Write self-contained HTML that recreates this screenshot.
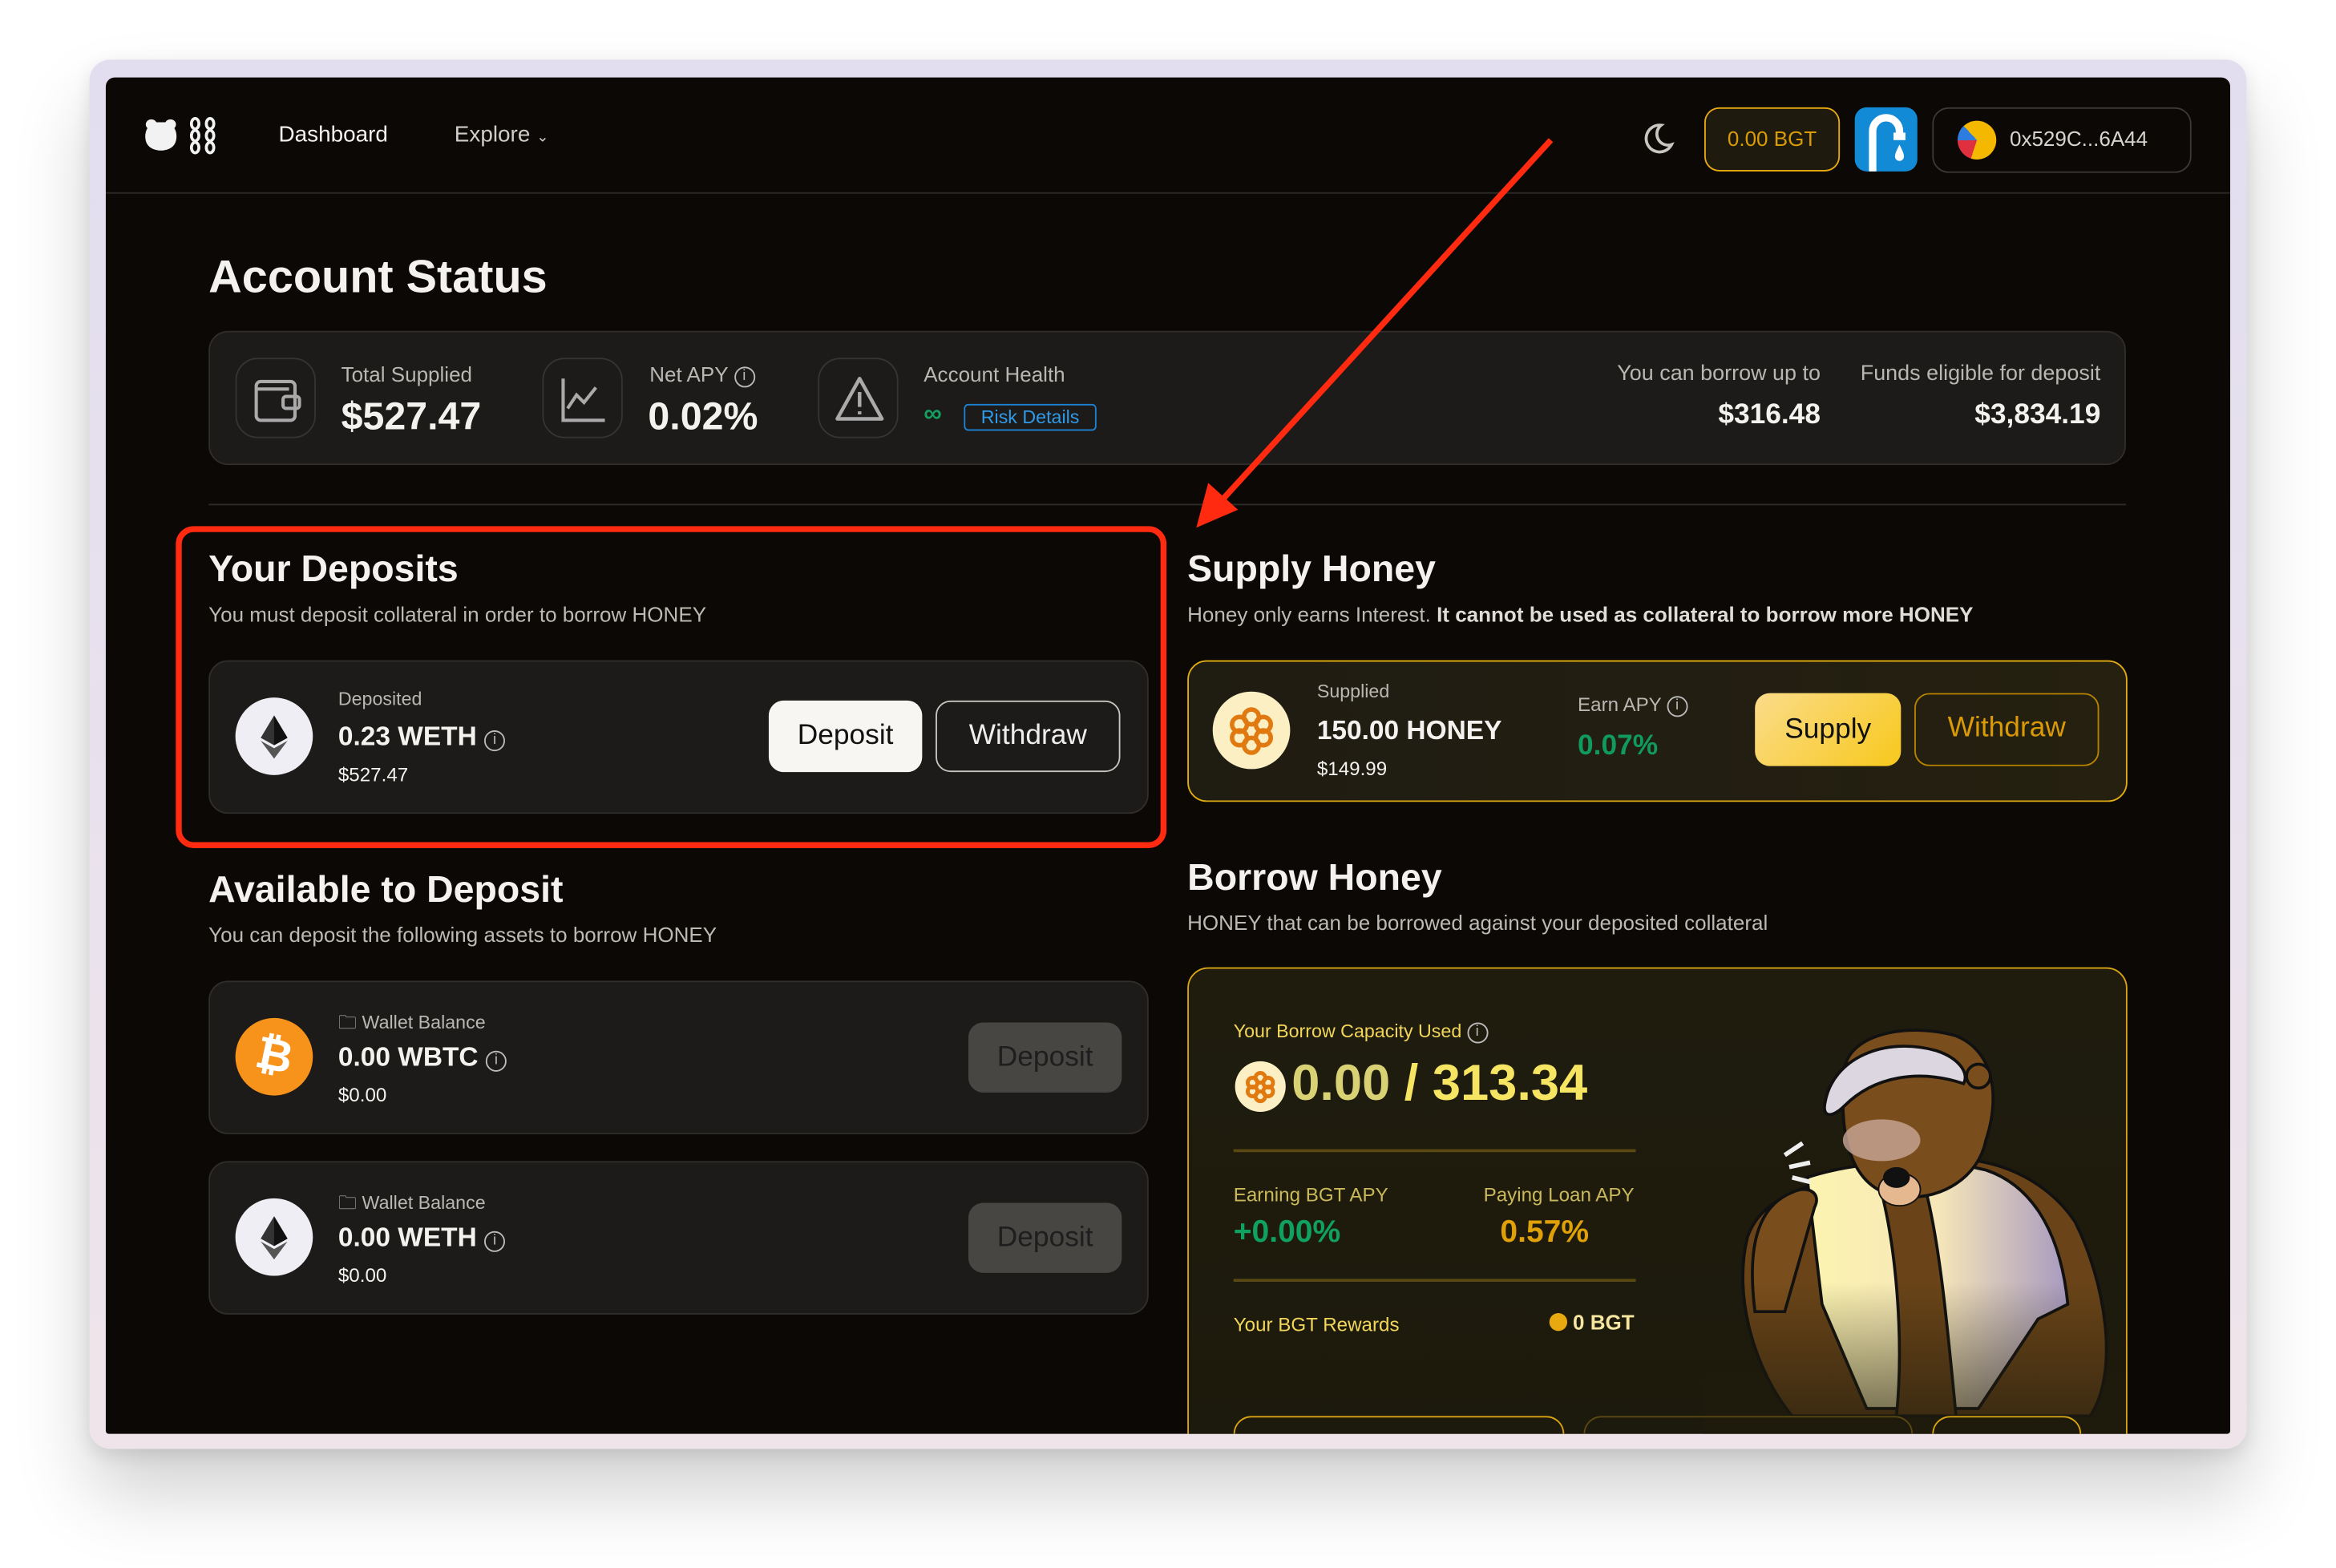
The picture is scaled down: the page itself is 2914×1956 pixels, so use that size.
<!DOCTYPE html>
<html><head><meta charset="utf-8">
<style>
*{box-sizing:border-box;margin:0;padding:0}
html,body{width:2914px;height:1956px;overflow:hidden;background:#fff}
#s{position:absolute;left:0;top:0;width:1568px;height:1052px;transform:scale(1.8584,1.8593);transform-origin:0 0;font-family:"Liberation Sans",sans-serif;background:#fff}
.a{position:absolute;white-space:nowrap}
.frame{left:60px;top:40px;width:1448px;height:932px;border-radius:14px;background:linear-gradient(180deg,#e2def0,#efe4ea);box-shadow:0 30px 50px rgba(0,0,0,.18),0 4px 12px rgba(0,0,0,.1)}
.win{left:71px;top:52px;width:1426px;height:910px;background:#0b0805;border-radius:6px 6px 2px 2px;overflow:hidden}
.card{background:#1c1b19;border:1px solid #2f2e2b;border-radius:13px}
.g{color:#b9b7b2}
.w{color:#f4f2ee}
.h2{font-size:25px;font-weight:bold;color:#f4f2ee}
.sub{font-size:14px;color:#bdbab4}
.ibox{width:54px;height:54px;border:1px solid #353431;border-radius:15px}
.btn{border-radius:10px;font-size:19px;text-align:center;font-weight:500}
.info{display:inline-block;width:14px;height:14px;border:1.4px solid #bbb;border-radius:50%;font-size:10px;line-height:11px;text-align:center;vertical-align:1px;color:#bbb;font-weight:normal}
</style></head><body><div id="s">
<div class="a frame"></div>
<div class="a win">
<svg class="a" style="left:24px;top:26px" width="56" height="26" viewBox="0 0 56 26"><path d="M4 3a4 4 0 0 1 6 1h6a4 4 0 0 1 6-1c2 2 1 4 0 5 2 3 2 8 0 11-2 3-6 4-9 4s-7-1-9-4c-2-3-2-8 0-11-1-1-2-3 0-5z" fill="#f2f2f2"/><g fill="none" stroke="#f2f2f2" stroke-width="2"><ellipse cx="36" cy="5" rx="2.5" ry="3.5"/><ellipse cx="36" cy="13" rx="2.5" ry="3.5"/><ellipse cx="36" cy="21" rx="2.5" ry="3.5"/><ellipse cx="46" cy="5" rx="2.5" ry="3.5"/><ellipse cx="46" cy="13" rx="2.5" ry="3.5"/><ellipse cx="46" cy="21" rx="2.5" ry="3.5"/></g></svg>
<div class="a w" style="left:116px;top:30px;font-size:15px">Dashboard</div>
<div class="a" style="left:234px;top:30px;font-size:15px;color:#cfcdc8">Explore <span style="font-size:10px">⌄</span></div>
<svg class="a" style="left:1030px;top:29px" width="24" height="24" viewBox="0 0 24 24"><path d="M14 3a9 9 0 1 0 7 13A7.5 7.5 0 0 1 14 3z" fill="none" stroke="#c8c6c0" stroke-width="2"/></svg>
<div class="a" style="left:1073px;top:20px;width:91px;height:43px;border:1.5px solid #e8aa10;border-radius:10px;background:#1e1a0e;color:#d99c06;font-size:14px;line-height:40px;text-align:center">0.00 BGT</div>
<div class="a" style="left:1174px;top:20px;width:42px;height:43px;background:#138ad6;border-radius:8px"><svg width="42" height="43" viewBox="0 0 42 43"><path d="M12 43V16a9 9 0 0 1 18 0v3" fill="none" stroke="#fff" stroke-width="5"/><rect x="26" y="17" width="8" height="5" fill="#fff"/><path d="M30 25c-2 4-3 6-3 8a3 3 0 0 0 6 0c0-2-1-4-3-8z" fill="#fff"/></svg></div>
<div class="a" style="left:1226px;top:20px;width:174px;height:44px;border:1px solid #3a3936;border-radius:11px"></div>
<div class="a" style="left:1243px;top:29px;width:26px;height:26px;border-radius:50%;background:conic-gradient(#f5b800 0 55%,#e03040 55% 75%,#2d7de0 75% 88%,#f5b800 88%)"></div>
<div class="a" style="left:1278px;top:33px;font-size:14px;color:#d6d4cf">0x529C...6A44</div>
<div class="a" style="left:0;top:77px;width:1426px;height:1px;background:#2c2b29"></div>

<div class="a w" style="left:69px;top:116px;font-size:31px;font-weight:bold">Account Status</div>
<div class="a card" style="left:69px;top:170px;width:1287px;height:90px"></div>
<div class="a ibox" style="left:87px;top:188px"><svg width="54" height="54" viewBox="0 0 54 54"><g fill="none" stroke="#aaa" stroke-width="2.2"><rect x="13" y="15" width="26" height="26" rx="3"/><path d="M13 20h22"/><rect x="31" y="25" width="11" height="8" rx="2"/></g></svg></div>
<div class="a g" style="left:158px;top:191px;font-size:14px">Total Supplied</div>
<div class="a w" style="left:158px;top:212px;font-size:26px;font-weight:bold">$527.47</div>
<div class="a ibox" style="left:293px;top:188px"><svg width="54" height="54" viewBox="0 0 54 54"><path d="M13 13v28h28M16 33l6-9 5 5 8-10" fill="none" stroke="#aaa" stroke-width="2.2"/></svg></div>
<div class="a g" style="left:365px;top:191px;font-size:14px">Net APY <span class="info">i</span></div>
<div class="a w" style="left:364px;top:212px;font-size:26px;font-weight:bold">0.02%</div>
<div class="a ibox" style="left:478px;top:188px"><svg width="54" height="54" viewBox="0 0 54 54"><path d="M27 13L12 40h30z" fill="none" stroke="#aaa" stroke-width="2.4" stroke-linejoin="round"/><path d="M27 22v10M27 35v2" stroke="#aaa" stroke-width="2.4"/></svg></div>
<div class="a g" style="left:549px;top:191px;font-size:14px">Account Health</div>
<div class="a" style="left:549px;top:216px;font-size:17px;color:#12a060;font-weight:bold">∞</div>
<div class="a" style="left:576px;top:219px;width:89px;height:18px;border:1px solid #1c82d4;border-radius:3px;color:#2e9aea;font-size:12.5px;line-height:16px;text-align:center">Risk Details</div>
<div class="a g" style="right:275px;top:191px;font-size:14.5px">You can borrow up to</div>
<div class="a w" style="right:275px;top:216px;font-size:19px;font-weight:bold">$316.48</div>
<div class="a g" style="right:87px;top:191px;font-size:14.5px">Funds eligible for deposit</div>
<div class="a w" style="right:87px;top:216px;font-size:19px;font-weight:bold">$3,834.19</div>
<div class="a" style="left:69px;top:286px;width:1287px;height:1px;background:#2e2d2a"></div>

<div class="a h2" style="left:69px;top:316px">Your Deposits</div>
<div class="a sub" style="left:69px;top:352px">You must deposit collateral in order to borrow HONEY</div>
<div class="a card" style="left:69px;top:391px;width:631px;height:103px"></div>
<div class="a" style="left:87px;top:416px;width:52px;height:52px;border-radius:50%;background:#eeeef4"><svg width="52" height="52" viewBox="0 0 52 52"><path d="M26 12l-9 15 9 5 9-5z" fill="#333"/><path d="M26 34l-9-5 9 12 9-12z" fill="#555"/><path d="M26 12v20l9-5z" fill="#111"/></svg></div>
<div class="a g" style="left:156px;top:410px;font-size:12.5px">Deposited</div>
<div class="a w" style="left:156px;top:432px;font-size:18px;font-weight:bold">0.23 WETH <span class="info">i</span></div>
<div class="a w" style="left:156px;top:460px;font-size:13px">$527.47</div>
<div class="a btn" style="left:445px;top:418px;width:103px;height:48px;background:#f7f6f3;color:#111;line-height:48px">Deposit</div>
<div class="a btn" style="left:557px;top:418px;width:124px;height:48px;border:1.5px solid #c8c6c1;color:#eee;line-height:45px">Withdraw</div>

<div class="a h2" style="left:69px;top:531px">Available to Deposit</div>
<div class="a sub" style="left:69px;top:567px">You can deposit the following assets to borrow HONEY</div>
<div class="a card" style="left:69px;top:606px;width:631px;height:103px"></div>
<div class="a" style="left:87px;top:631px;width:52px;height:52px;border-radius:50%;background:#f7931a;color:#fff;font-size:30px;font-weight:bold;text-align:center;line-height:52px;transform:rotate(12deg)">₿</div>
<div class="a g" style="left:156px;top:625px;font-size:12.5px">🗀 Wallet Balance</div>
<div class="a w" style="left:156px;top:647px;font-size:18px;font-weight:bold">0.00 WBTC <span class="info">i</span></div>
<div class="a w" style="left:156px;top:675px;font-size:13px">$0.00</div>
<div class="a btn" style="left:579px;top:634px;width:103px;height:47px;background:#474643;color:#1e1e1e;line-height:47px">Deposit</div>
<div class="a card" style="left:69px;top:727px;width:631px;height:103px"></div>
<div class="a" style="left:87px;top:752px;width:52px;height:52px;border-radius:50%;background:#eeeef4"><svg width="52" height="52" viewBox="0 0 52 52"><path d="M26 12l-9 15 9 5 9-5z" fill="#333"/><path d="M26 34l-9-5 9 12 9-12z" fill="#555"/><path d="M26 12v20l9-5z" fill="#111"/></svg></div>
<div class="a g" style="left:156px;top:746px;font-size:12.5px">🗀 Wallet Balance</div>
<div class="a w" style="left:156px;top:768px;font-size:18px;font-weight:bold">0.00 WETH <span class="info">i</span></div>
<div class="a w" style="left:156px;top:796px;font-size:13px">$0.00</div>
<div class="a btn" style="left:579px;top:755px;width:103px;height:47px;background:#474643;color:#1e1e1e;line-height:47px">Deposit</div>

<div class="a h2" style="left:726px;top:316px">Supply Honey</div>
<div class="a sub" style="left:726px;top:352px">Honey only earns Interest. <b style="color:#dedcd6">It cannot be used as collateral to borrow more HONEY</b></div>
<div class="a" style="left:726px;top:391px;width:631px;height:95px;border:1.5px solid #e2ac10;border-radius:13px;background:linear-gradient(90deg,#1f1c12,#252010)"></div>
<div class="a" style="left:743px;top:412px;width:52px;height:52px;border-radius:50%;background:#fcefc4"><svg width="52" height="52" viewBox="0 0 52 52"><g fill="none" stroke="#e07a10" stroke-width="3"><circle cx="26" cy="17" r="5"/><circle cx="18" cy="22" r="5"/><circle cx="34" cy="22" r="5"/><circle cx="18" cy="31" r="5"/><circle cx="34" cy="31" r="5"/><circle cx="26" cy="36" r="5"/></g></svg></div>
<div class="a g" style="left:813px;top:405px;font-size:12.5px">Supplied</div>
<div class="a w" style="left:813px;top:428px;font-size:18px;font-weight:bold">150.00 HONEY</div>
<div class="a w" style="left:813px;top:456px;font-size:13px">$149.99</div>
<div class="a g" style="left:988px;top:413px;font-size:13px">Earn APY <span class="info">i</span></div>
<div class="a" style="left:988px;top:438px;font-size:19px;font-weight:bold;color:#109a5e">0.07%</div>
<div class="a btn" style="left:1107px;top:413px;width:98px;height:49px;background:linear-gradient(135deg,#fbdc8a,#f7c81c);color:#111;line-height:49px">Supply</div>
<div class="a btn" style="left:1214px;top:413px;width:124px;height:49px;border:1.5px solid #b88400;color:#d99a06;line-height:46px">Withdraw</div>

<div class="a h2" style="left:726px;top:523px">Borrow Honey</div>
<div class="a sub" style="left:726px;top:559px">HONEY that can be borrowed against your deposited collateral</div>
<div class="a" style="left:726px;top:597px;width:631px;height:360px;border:1.5px solid #d8a412;border-radius:14px;background:linear-gradient(180deg,#1f1c0e,#1c1a0c);overflow:hidden">
 <svg class="a" style="left:345px;top:25px" width="290" height="310" viewBox="0 0 290 300">
  <defs><linearGradient id="sh" x1="0" y1="0" x2="1" y2="0"><stop offset="0" stop-color="#fcf4b0"/><stop offset=".5" stop-color="#f6e6b8"/><stop offset="1" stop-color="#a89ac0"/></linearGradient>
  <linearGradient id="fd" x1="0" y1="0" x2="0" y2="1"><stop offset=".6" stop-color="#1e1b0d" stop-opacity="0"/><stop offset="1" stop-color="#1e1b0d" stop-opacity=".8"/></linearGradient></defs>
  <path d="M30 150c-10 40 5 90 30 120h200c20-30 10-90-10-130-20-30-60-50-110-40-60 10-100 20-110 50z" fill="#6a4418" stroke="#111" stroke-width="2"/>
  <path d="M70 110c30-10 80-15 120-5 30 10 50 40 55 90l-20 10-40 60H110l-30-70z" fill="url(#sh)" stroke="#111" stroke-width="2"/>
  <path d="M120 120c10 40 15 100 10 150h40c-5-50-10-110-20-150z" fill="#6a4418" stroke="#111" stroke-width="2"/>
  <path d="M95 40c0-25 40-35 75-25 25 10 30 40 20 70-5 25-30 40-55 38-30-2-45-30-40-83z" fill="#7a4e1c" stroke="#111" stroke-width="2"/>
  <path d="M82 60c5-30 40-45 75-35 15 5 22 15 18 22-30-10-60-5-80 15-8 8-15 8-13-2z" fill="#dcd6e0" stroke="#111" stroke-width="2"/>
  <ellipse cx="120" cy="85" rx="26" ry="14" fill="#c9a89a" opacity=".8"/>
  <ellipse cx="132" cy="118" rx="14" ry="11" fill="#e6b890" stroke="#111"/>
  <ellipse cx="130" cy="110" rx="9" ry="7" fill="#111"/>
  <circle cx="185" cy="42" r="8" fill="#7a4e1c" stroke="#111" stroke-width="2"/>
  <path d="M35 200c-5-40 0-70 25-80 10-5 20 0 15 10l-20 70z" fill="#7a4e1c" stroke="#111" stroke-width="2"/>
  <path d="M55 95l12-8M58 103l14-3M60 110l12 3" stroke="#eee" stroke-width="3"/>
  <rect x="0" y="0" width="290" height="300" fill="url(#fd)"/>
 </svg>
 <div class="a" style="left:30px;top:35px;font-size:12.5px;color:#f2d65a">Your Borrow Capacity Used <span class="info" style="border-color:#bbb">i</span></div>
 <div class="a" style="left:31px;top:62px;width:34px;height:34px;border-radius:50%;background:#fcefc4"><svg width="34" height="34" viewBox="0 0 52 52"><g fill="none" stroke="#e07a10" stroke-width="4"><circle cx="26" cy="17" r="5"/><circle cx="18" cy="22" r="5"/><circle cx="34" cy="22" r="5"/><circle cx="18" cy="31" r="5"/><circle cx="34" cy="31" r="5"/><circle cx="26" cy="36" r="5"/></g></svg></div>
 <div class="a" style="left:69px;top:58px;font-size:34px;font-weight:bold;color:#d8d274">0.00<span style="color:#f6e562"> / 313.34</span></div>
 <div class="a" style="left:30px;top:121px;width:270px;height:1.5px;background:#5a4812"></div>
 <div class="a" style="left:30px;top:144px;font-size:13px;color:#c9b95a">Earning BGT APY</div>
 <div class="a" style="left:30px;top:165px;font-size:21px;font-weight:bold;color:#10a060">+0.00%</div>
 <div class="a" style="right:330px;top:144px;font-size:13px;color:#c9b95a">Paying Loan APY</div>
 <div class="a" style="left:209px;top:165px;font-size:21px;font-weight:bold;color:#e0a008">0.57%</div>
 <div class="a" style="left:30px;top:208px;width:270px;height:1.5px;background:#5a4812"></div>
 <div class="a" style="left:30px;top:231px;font-size:13px;color:#f2d65a">Your BGT Rewards</div>
 <div class="a" style="right:330px;top:229px;font-size:14px;font-weight:bold;color:#f6e6a0"><span style="display:inline-block;width:12px;height:12px;border-radius:50%;background:#e8a810;vertical-align:-1px"></span> 0 BGT</div>
 <div class="a" style="left:30px;top:300px;width:222px;height:40px;border:1.5px solid #d8a412;border-radius:12px"></div>
 <div class="a" style="left:265px;top:300px;width:221px;height:40px;border:1.5px solid #5a4812;border-radius:12px"></div>
 <div class="a" style="left:499px;top:300px;width:100px;height:40px;border:1.5px solid #d8a412;border-radius:12px"></div>
</div>
</div>
<div class="a" style="left:118px;top:353px;width:665px;height:216px;border:4px solid #ff2a10;border-radius:12px"></div>
<svg class="a" style="left:0;top:0" width="1568" height="1052"><line x1="1041" y1="94" x2="818" y2="338" stroke="#ff2a10" stroke-width="4"/><path d="M803 354l8-30 20 18z" fill="#ff2a10"/></svg>
</div></body></html>
